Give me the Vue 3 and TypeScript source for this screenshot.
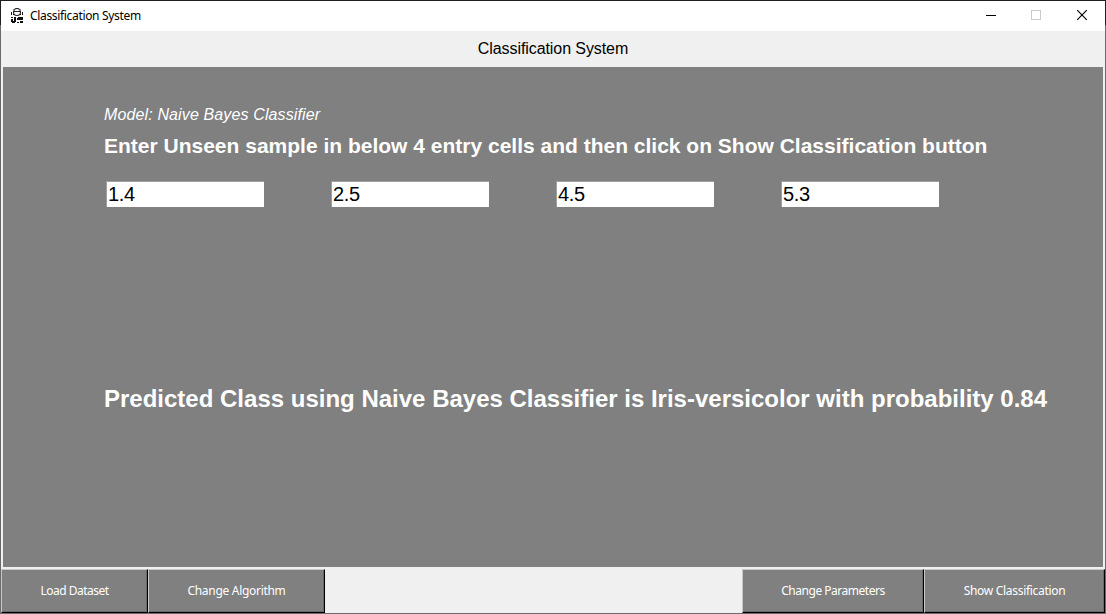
<script setup lang="ts">
import { ref } from 'vue'

const samples = ref<string[]>(['1.4', '2.5', '4.5', '5.3'])
</script>

<template>
  <div class="window">
    <header class="titlebar">
      <svg class="app-icon" width="14" height="16" viewBox="0 0 14 16">
        <path d="M4.5 1.5Q7-.5 9.5 1.5M3 3.5h8M3.5 4Q3.5 7.5 7 7.5T10.500 4" fill="none" stroke="#222" stroke-width="1.1" />
        <path d="M3 1.500h2v1h-2zM9 1.500h2v1h-2zM1 4h1v3h-1zM12 4h1v3h-1zM3 6h1v1h-1zM10 6h1v1h-1z" fill="#111" />
        <path d="M1 9h2v1h-2zM4 9h2v5h-1v1h-3v-1h-1v-3h2v2h1zM8 9h5v3h-5zM7 10h1v2h-1zM7 14h2v1h-2zM10 13h3v2h-3z" fill="#111" shape-rendering="crispEdges" />
      </svg>
      <span class="caption">Classification System</span>
      <div class="controls">
        <svg width="46" height="30" viewBox="0 0 46 30" shape-rendering="crispEdges"><path d="M19 14.5h10" stroke="#000" /></svg>
        <svg width="46" height="30" viewBox="0 0 46 30" shape-rendering="crispEdges"><rect x="18.5" y="9.5" width="9" height="9" fill="none" stroke="#ccc" /></svg>
        <svg width="46" height="30" viewBox="0 0 46 30"><path d="M18.200 9.200l9.600 9.600M27.800 9.200l-9.600 9.600" stroke="#000" stroke-width="1.15" /></svg>
      </div>
    </header>
    <div class="heading"><span>Classification System</span></div>
    <main class="panel">
      <div class="model">Model: Naive Bayes Classifier</div>
      <div class="prompt">Enter Unseen sample in below 4 entry cells and then click on Show Classification button</div>
      <div class="entries">
        <input v-for="(_, i) in samples" :key="i" v-model="samples[i]" class="entry" type="text" />
      </div>
      <div class="result">Predicted Class using Naive Bayes Classifier is Iris-versicolor with probability 0.84</div>
    </main>
    <footer class="actions">
      <button class="load"><span>Load Dataset</span></button>
      <button class="algorithm"><span>Change Algorithm</span></button>
      <button class="parameters"><span>Change Parameters</span></button>
      <button class="show"><span>Show Classification</span></button>
    </footer>
  </div>
</template>

<style>
body { margin: 0; overflow: hidden; }
</style>

<style scoped>
.window {
  box-sizing: border-box;
  width: 1106px;
  height: 614px;
  display: flex;
  flex-direction: column;
  background: #f0f0f0;
  border: 1px solid #6b6b6b;
  border-image: linear-gradient(#211d21 25px, #6b6b6b 25px) 1;
  font-family: "Liberation Sans", Arial, sans-serif;
}
.titlebar {
  flex: none;
  height: 30px;
  display: flex;
  align-items: center;
  background: #fff;
}
.app-icon { margin-left: 9px; }
.caption {
  margin-left: 6px;
  font: 12px/16px "Noto Sans", sans-serif;
  letter-spacing: -0.33px;
  color: #000;
  white-space: nowrap;
}
.controls { display: flex; margin-left: auto; }
.heading {
  flex: none;
  height: 36px;
  display: flex;
  justify-content: center;
  font-size: 16px;
  line-height: 35px;
  letter-spacing: -0.08px;
  color: #000;
}
.panel {
  flex: none;
  box-sizing: border-box;
  height: 500px;
  margin: 0 2px;
  padding: 39px 0 0 101px;
  background: #808080;
  color: #fff;
  white-space: nowrap;
}
.model { font-size: 16px; font-style: italic; line-height: 18px; letter-spacing: 0.13px; }
.prompt { margin-top: 10px; font-size: 21px; font-weight: bold; line-height: 24px; }
.entries { display: flex; gap: 67px; margin: 23px 0 0 2px; }
.entry {
  box-sizing: border-box;
  width: 158px;
  height: 26px;
  padding: 0 1px;
  border: 0 solid #a0a0a0;
  border-width: 1px 0 0 1px;
  border-radius: 0;
  outline: 0;
  background: #fff;
  color: #000;
  font: 20px "Liberation Sans", Arial, sans-serif;
  letter-spacing: -0.4px;
}
.result { margin-top: 178px; font-size: 24px; font-weight: bold; line-height: 28px; }
.actions { flex: none; display: flex; height: 44px; margin-top: 2px; }
.actions button {
  box-sizing: border-box;
  height: 44px;
  padding: 0;
  border: 1px solid;
  border-color: #c8c8c8 #000 #000 #c8c8c8;
  border-radius: 0;
  box-shadow: inset -1px -1px #696969;
  background: #808080;
  color: #fff;
  font: 12px/16px "Noto Sans", sans-serif;
}
.actions .load { width: 147px; letter-spacing: -0.5px; }
.actions .algorithm { width: 177px; letter-spacing: -0.3px; }
.actions .parameters { width: 182px; margin-left: auto; letter-spacing: -0.48px; }
.actions .show { width: 181px; letter-spacing: -0.3px; }
</style>
